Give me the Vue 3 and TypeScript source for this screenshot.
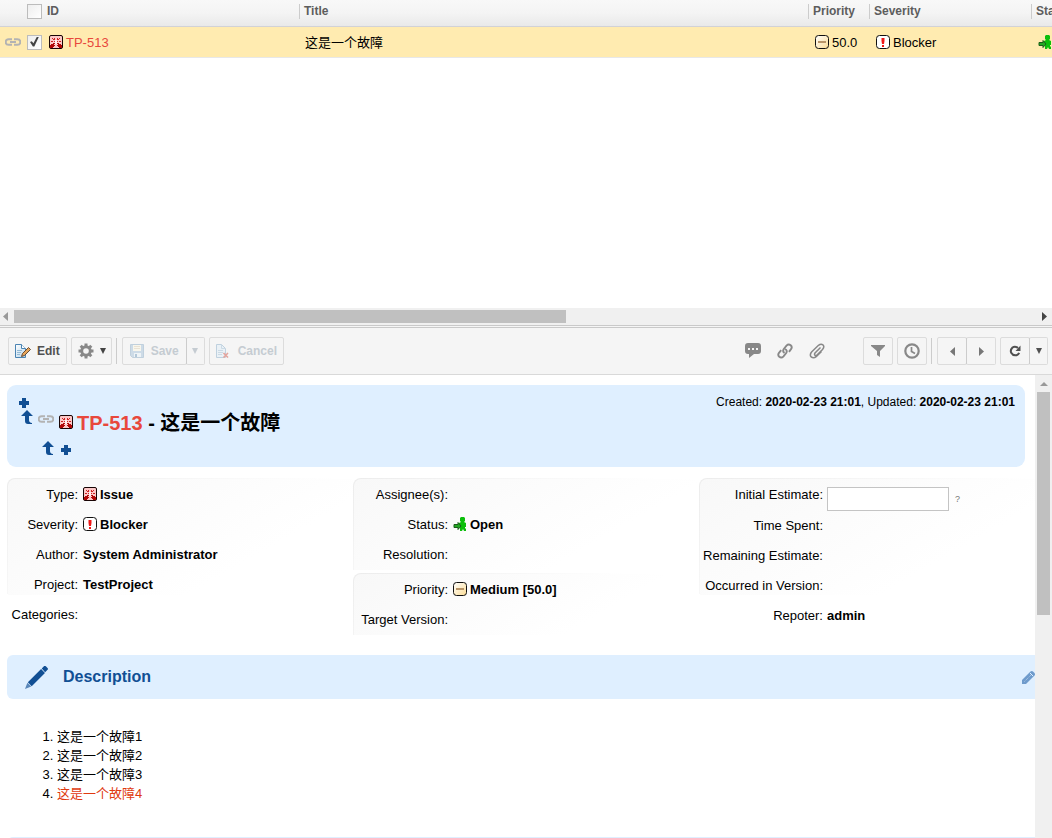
<script setup lang="ts">
import { ref } from 'vue'

interface Field {
  label: string
  value?: string
  icon?: string
  input?: boolean
}

interface Panel {
  tall?: boolean
  fields: Field[]
}

const allSelected = ref(false)
const rowSelected = ref(true)
const estimate = ref('')

const columns: { name: string; panels: Panel[] }[] = [
  {
    name: 'first',
    panels: [
      {
        tall: true,
        fields: [
          { label: 'Type:', value: 'Issue', icon: 'issue' },
          { label: 'Severity:', value: 'Blocker', icon: 'blocker' },
          { label: 'Author:', value: 'System Administrator' },
          { label: 'Project:', value: 'TestProject' },
          { label: 'Categories:' },
        ],
      },
    ],
  },
  {
    name: 'second',
    panels: [
      {
        fields: [
          { label: 'Assignee(s):' },
          { label: 'Status:', value: 'Open', icon: 'open' },
          { label: 'Resolution:' },
        ],
      },
      {
        fields: [
          { label: 'Priority:', value: 'Medium [50.0]', icon: 'medium' },
          { label: 'Target Version:' },
        ],
      },
    ],
  },
  {
    name: 'third',
    panels: [
      {
        tall: true,
        fields: [
          { label: 'Initial Estimate:', input: true },
          { label: 'Time Spent:' },
          { label: 'Remaining Estimate:' },
          { label: 'Occurred in Version:' },
          { label: 'Repoter:', value: 'admin' },
        ],
      },
    ],
  },
]

const steps = [
  { text: '这是一个故障1' },
  { text: '这是一个故障2' },
  { text: '这是一个故障3' },
  { text: '这是一个故障4', highlighted: true },
]
</script>

<template>
  <div class="page">
    <svg class="sprite" aria-hidden="true">
      <defs>
        <linearGradient id="cream" x1="0" y1="0" x2="1" y2="1">
          <stop offset="0" stop-color="#fff" />
          <stop offset="1" stop-color="#fbdc94" />
        </linearGradient>
        <linearGradient id="paper" x1="0" y1="0" x2="1" y2="1">
          <stop offset="0" stop-color="#fff" />
          <stop offset="1" stop-color="#b5d4ea" />
        </linearGradient>
      </defs>
      <symbol id="issue" viewBox="0 0 14 14">
        <rect x=".5" y=".5" width="13" height="13" rx="1.500" fill="#fcc8c8" stroke="#180404" />
        <path d="M1 13V10H2V9H4V8H6V9H5V10H6V11H5V12H4V13zM13 13V10H12V9H10V8H8V9H9V10H8V11H9V12H10V13z" fill="#b00808" />
        <path d="M3 3h1v1H3zM4 4h1v1H4zM10 3h1v1h-1zM9 4h1v1H9zM2 6h2v1H2zM10 6h2v1h-2zM5 3h1v2H5zM8 3h1v2H8zM5 6h1v1H5zM8 6h1v1H8z" fill="#cc2222" />
        <path d="M6 5h2v4H6z" fill="#fff0f0" />
      </symbol>
      <symbol id="blocker" viewBox="0 0 14 14">
        <rect x=".5" y=".5" width="13" height="13" rx="3" fill="#fff" stroke="#111" />
        <path d="M5.500 3h3v3l-.5 3H6l-.5-3zM6 10h2v2H6z" fill="#f01818" />
      </symbol>
      <symbol id="medium" viewBox="0 0 14 14">
        <rect x=".5" y=".5" width="13" height="13" rx="3" fill="url(#cream)" stroke="#111" />
        <path d="M3 6h8v2H3z" fill="#b99568" />
      </symbol>
      <symbol id="open" viewBox="0 0 14 14">
        <path d="M8 0h3l1 1v3l-1 1 2 1v4h-1v1l1 1v2h-2l-1-2-1 2H7v-4L6 9V6l2-1-1-1V1z" fill="#0cbf0c" />
        <path d="M1 7.500h4V5.500L8 9l-3 3.500V10.500H1z" fill="#24a824" stroke="#1b5e1b" />
      </symbol>
      <symbol id="chain" viewBox="0 0 16 8">
        <path d="M7 1.200H3.500a2.700 2.700 0 0 0 0 5.600H7M9 1.200h3.500a2.700 2.700 0 0 1 0 5.600H9M5 4h6" fill="none" stroke="currentColor" stroke-width="1.900" />
      </symbol>
      <symbol id="plus" viewBox="0 0 10 10">
        <path d="M3 0h4v3h3v4H7v3H3V7H0V3h3z" fill="#114f94" />
      </symbol>
      <symbol id="up" viewBox="0 0 12 14">
        <path d="M6 0l6 6H8v4q0 2.500 3 3v1H7q-3 0-3-3V6H0z" fill="#114f94" />
      </symbol>
      <symbol id="left" viewBox="0 0 5 9"><path d="M5 0v9L0 4.500z" fill="currentColor" /></symbol>
      <symbol id="right" viewBox="0 0 5 9"><path d="M0 0v9l5-4.500z" fill="currentColor" /></symbol>
      <symbol id="down" viewBox="0 0 6 6"><path d="M0 0h6L3 6z" fill="currentColor" /></symbol>
      <symbol id="edit" viewBox="0 0 16 16">
        <path d="M.5 1.500h6l4 4v9H.5z" fill="url(#paper)" stroke="#4b84b3" />
        <path d="M6.500 1.500v4h4" fill="#fff" stroke="#4b84b3" />
        <path d="M2 7.500h5M2 9.500h4M2 11.500h3" stroke="#93bad6" />
        <path d="M6.500 13.500l1-3 6-6 2 2-6 6z" fill="#e6a55b" stroke="#5b4029" stroke-width=".900" />
      </symbol>
      <symbol id="gear" viewBox="0 0 16 16">
        <g fill="currentColor">
          <path d="M6.500 .5h3v15h-3z" />
          <path d="M6.500 .5h3v15h-3z" transform="rotate(45 8 8)" />
          <path d="M6.500 .5h3v15h-3z" transform="rotate(90 8 8)" />
          <path d="M6.500 .5h3v15h-3z" transform="rotate(135 8 8)" />
          <circle cx="8" cy="8" r="5.700" />
        </g>
        <circle cx="8" cy="8" r="2.800" fill="#f5f5f5" />
      </symbol>
      <symbol id="disk" viewBox="0 0 14 14">
        <path d="M.5.5h13v13h-11l-2-2z" fill="#cddbe7" stroke="#c0d0dd" />
        <path d="M3 1h8v6H3z" fill="#f8f6ec" />
        <path d="M4 2.500h6M4 4.500h6" stroke="#e9e2d4" />
        <path d="M4 9h7v4H4z" fill="#eef3f6" />
        <path d="M5 10h2v3H5z" fill="#b2c7d8" />
      </symbol>
      <symbol id="discard" viewBox="0 0 14 14">
        <path d="M.5.5h5l4 4v9h-9z" fill="#eaf1f6" stroke="#bfd1df" />
        <path d="M5.500.5v4h4M2 6.500h5M2 8.500h5M2 10.500h4" fill="none" stroke="#cbdae5" />
        <path d="M7.500 9l4.500 4.500M12 9l-4.500 4.500" stroke="#e3a49d" stroke-width="1.600" />
      </symbol>
      <symbol id="comment" viewBox="0 0 16 16">
        <path d="M3 0h10q3 0 3 3v5q0 3-3 3H9l-5 4v-4H3q-3 0-3-3V3q0-3 3-3z" fill="currentColor" />
        <path d="M3 5h2v2H3zM7 5h2v2H7zM11 5h2v2h-2z" fill="#f5f5f5" />
      </symbol>
      <symbol id="link" viewBox="0 0 16 16">
        <g fill="none" stroke="currentColor" stroke-width="1.900">
          <path d="M7.500 10Q5.200 8.500 6.800 6L9.500 2.600Q11.500.600 13.700 2.200 15.600 4 14 6.200L12 8.800" />
          <path d="M8 6Q10.800 7.500 9.200 10L6.500 13.300Q4.500 15.400 2.300 13.800.4 12 2 9.800L4.200 7.200" />
        </g>
      </symbol>
      <symbol id="clip" viewBox="0 0 16 16">
        <path d="M11.500 4.500L6 10Q5 11.500 6 12.300 7 13 8 12L13.500 6.500Q15.800 3.800 14 1.900 12 .3 9.500 2.300L2.800 8.800Q.2 11.800 2.200 13.900 4.500 15.800 7.200 13.600L12.500 8.500" fill="none" stroke="currentColor" stroke-width="1.500" />
      </symbol>
      <symbol id="filter" viewBox="0 0 14 14">
        <path d="M0 1h14v1L9 7v6L6 11V7L0 2z" fill="currentColor" />
      </symbol>
      <symbol id="clock" viewBox="0 0 16 16">
        <circle cx="8" cy="8" r="6.700" fill="none" stroke="currentColor" stroke-width="2.200" />
        <path d="M7.500 4v4.500L11 10.500" fill="none" stroke="currentColor" stroke-width="1.700" />
      </symbol>
      <symbol id="refresh" viewBox="0 0 12 12">
        <path d="M9 3Q6 .6 3.500 2.500 1 5 2.200 7.800 4 11 7.500 10.200 9.500 9.500 10.200 7.800" fill="none" stroke="currentColor" stroke-width="2" />
        <path d="M11.500.5V6H6.500z" fill="currentColor" />
      </symbol>
      <symbol id="pencil" viewBox="0 0 24 24">
        <path d="M17.500 2.500L20 0q1-.5 2 .5L23.500 2q1 1 0 2L21 6.500z" fill="currentColor" />
        <path d="M16.800 3.200L20.800 7.200 7 21 3 17z" fill="currentColor" />
        <path d="M2.500 17.500L6.500 21.500 0 24z" fill="currentColor" opacity=".65" />
      </symbol>
      <symbol id="small-pencil" viewBox="0 0 13 13">
        <path d="M0 9L8.500.5q1.500-1 3 .5l1 1q1 1.500 0 2.500L4 13H0z" fill="#6f9bcc" />
        <path d="M2.500 10.500l7-7" stroke="#b9d1ec" stroke-dasharray="1 1" />
        <path d="M8 2l3 3" stroke="#dfefff" />
      </symbol>
    </svg>

    <section class="list-pane">
      <table>
        <colgroup>
          <col class="c-select" /><col class="c-id" /><col />
          <col class="c-priority" /><col class="c-severity" /><col class="c-status" />
        </colgroup>
        <thead>
          <tr>
            <th class="select"><input v-model="allSelected" type="checkbox" aria-label="Select all" /></th>
            <th class="id">ID</th>
            <th><span class="head">Title</span></th>
            <th><span class="head">Priority</span></th>
            <th><span class="head">Severity</span></th>
            <th><span class="head">Status</span></th>
          </tr>
        </thead>
        <tbody>
          <tr>
            <td class="select">
              <div class="select-cell">
                <svg class="chain"><use href="#chain" /></svg>
                <input v-model="rowSelected" type="checkbox" aria-label="Select TP-513" />
              </div>
            </td>
            <td class="id">
              <a class="cell" href="#TP-513"><svg class="i14"><use href="#issue" /></svg>TP-513</a>
            </td>
            <td>这是一个故障</td>
            <td class="iconic"><span class="cell"><svg class="i14"><use href="#medium" /></svg>50.0</span></td>
            <td class="iconic"><span class="cell"><svg class="i14"><use href="#blocker" /></svg>Blocker</span></td>
            <td class="iconic"><span class="cell"><svg class="i14"><use href="#open" /></svg>Open</span></td>
          </tr>
        </tbody>
      </table>
    </section>

    <div class="hscroll">
      <svg class="tri muted"><use href="#left" /></svg>
      <div class="htrack"><div class="hthumb"></div></div>
      <svg class="tri"><use href="#right" /></svg>
    </div>
    <div class="splitter"></div>

    <div class="toolbar">
      <button class="btn edit"><svg class="i16"><use href="#edit" /></svg>Edit</button>
      <button class="btn menu" aria-label="Actions">
        <svg class="i16 grey"><use href="#gear" /></svg><svg class="caret"><use href="#down" /></svg>
      </button>
      <span class="sep"></span>
      <div class="group">
        <button class="btn save" disabled><svg class="i14"><use href="#disk" /></svg>Save</button>
        <button class="btn drop" disabled aria-label="Save options"><svg class="caret"><use href="#down" /></svg></button>
      </div>
      <button class="btn cancel" disabled><svg class="i14"><use href="#discard" /></svg>Cancel</button>

      <div class="plain-actions">
        <button aria-label="Comment"><svg class="i16"><use href="#comment" /></svg></button>
        <button aria-label="Link"><svg class="i16"><use href="#link" /></svg></button>
        <button aria-label="Attach"><svg class="i16"><use href="#clip" /></svg></button>
      </div>
      <button class="btn square grey" aria-label="Filter"><svg class="i14"><use href="#filter" /></svg></button>
      <button class="btn square grey" aria-label="History"><svg class="i16"><use href="#clock" /></svg></button>
      <span class="sep"></span>
      <div class="group">
        <button class="btn square dim" aria-label="Previous"><svg class="tri"><use href="#left" /></svg></button>
        <button class="btn square dim" aria-label="Next"><svg class="tri"><use href="#right" /></svg></button>
      </div>
      <div class="group">
        <button class="btn square" aria-label="Refresh"><svg class="i12"><use href="#refresh" /></svg></button>
        <button class="btn drop" aria-label="Refresh options"><svg class="caret"><use href="#down" /></svg></button>
      </div>
    </div>

    <div class="detail-pane">
      <main class="detail">
        <header class="hero">
          <div class="hero-top">
            <button class="plus" aria-label="Add sibling"><svg><use href="#plus" /></svg></button>
            <p>Created: <b>2020-02-23 21:01</b>, Updated: <b>2020-02-23 21:01</b></p>
          </div>
          <div class="hero-title">
            <button class="up" aria-label="Go to parent"><svg><use href="#up" /></svg></button>
            <svg class="chain"><use href="#chain" /></svg>
            <svg class="i14"><use href="#issue" /></svg>
            <h1><a href="#TP-513">TP-513</a> - 这是一个故障</h1>
          </div>
          <div class="hero-bottom">
            <button class="up" aria-label="Go up"><svg><use href="#up" /></svg></button>
            <button class="plus" aria-label="Add child"><svg><use href="#plus" /></svg></button>
          </div>
        </header>

        <div class="fields">
          <div v-for="col in columns" :key="col.name" class="column" :class="col.name">
            <dl v-for="(panel, i) in col.panels" :key="i" class="panel" :class="{ tall: panel.tall }">
              <div v-for="f in panel.fields" :key="f.label" class="field" :class="{ editable: f.input }">
                <dt>
                  <label v-if="f.input" for="estimate">{{ f.label }}</label>
                  <template v-else>{{ f.label }}</template>
                </dt>
                <dd>
                  <template v-if="f.input">
                    <input id="estimate" v-model="estimate" type="text" /><span class="hint">?</span>
                  </template>
                  <template v-else>
                    <svg v-if="f.icon" class="i14"><use :href="'#' + f.icon" /></svg>{{ f.value }}
                  </template>
                </dd>
              </div>
            </dl>
          </div>
        </div>

        <section class="description">
          <header class="bar">
            <svg class="big-pencil"><use href="#pencil" /></svg>
            <h2>Description</h2>
            <button class="bar-edit" aria-label="Edit description"><svg><use href="#small-pencil" /></svg></button>
          </header>
          <ol>
            <li v-for="s in steps" :key="s.text"><span :class="{ highlighted: s.highlighted }">{{ s.text }}</span></li>
          </ol>
        </section>
        <div class="bar"></div>
      </main>
      <div class="vscroll">
        <i class="tri-up"></i>
        <div class="vtrack"><div class="vthumb"></div></div>
      </div>
    </div>
  </div>
</template>

<style>
body {
  margin: 0;
  background: #fff;
}
</style>

<style scoped>
* {
  box-sizing: border-box;
}
.page {
  display: flex;
  flex-direction: column;
  height: 100vh;
  overflow: hidden;
  font: 13px/19px "Liberation Sans", Arial, "Noto Sans CJK SC", sans-serif;
  color: #000;
}
.sprite {
  position: absolute;
  width: 0;
  height: 0;
}
svg {
  display: block;
  flex: none;
}
button {
  font: inherit;
  padding: 0;
  border: 0;
  background: none;
  color: inherit;
}
a {
  color: #e8483c;
  text-decoration: none;
}
.i12 { width: 12px; height: 12px; }
.i14 { width: 14px; height: 14px; }
.i16 { width: 16px; height: 16px; }
.chain { width: 16px; height: 8px; color: #b3b3b3; }
.tri { width: 5px; height: 9px; }
.caret { width: 6px; height: 6px; }
.grey { color: #888; }

.list-pane {
  flex: 0 0 308px;
  overflow: hidden;
}
table {
  width: calc(100% + 80px);
  table-layout: fixed;
  border-collapse: separate;
  border-spacing: 0;
}
.c-select { width: 47px; }
.c-id { width: 252px; }
.c-priority { width: 61px; }
.c-severity { width: 162px; }
.c-status { width: 101px; }
th {
  height: 27px;
  padding: 0 0 4px;
  background: linear-gradient(#f8f8f8, #f4f4f4 50%, #e9e9e9);
  border-bottom: 1px solid #d2d2d6;
  color: #5d5d5d;
  font-size: 12px;
  line-height: 15px;
  text-align: left;
}
.head {
  display: block;
  padding-left: 4px;
  border-left: 1px solid #ccc;
}
td {
  height: 31px;
  padding: 0 0 0 6px;
  background: #ffebb0;
  border-bottom: 1px solid #e8e8e8;
}
th.select { padding-left: 27px; }
th input { display: block; }
td.select { padding-left: 5px; }
td.id { padding-left: 2px; }
td.iconic { padding-left: 7px; }
.select-cell {
  display: flex;
  align-items: center;
  gap: 6px;
}
.cell {
  display: flex;
  align-items: center;
  gap: 3px;
}
input[type="checkbox"] {
  appearance: none;
  width: 15px;
  height: 15px;
  margin: 0;
  border: 1px solid #bcbcbc;
  background: linear-gradient(135deg, #eee, #fff);
}
input[type="checkbox"]:checked::after {
  content: "";
  display: block;
  width: 9px;
  height: 10px;
  margin: 1px 2px;
  background: #444;
  clip-path: polygon(0 55%, 20% 48%, 38% 68%, 78% 0, 100% 0, 48% 100%, 32% 100%);
}

.hscroll {
  flex: none;
  display: flex;
  align-items: center;
  gap: 6px;
  height: 17px;
  padding: 0 5px 0 3px;
  background: #f0f0f0;
  color: #444;
}
.muted { color: #999; }
.htrack { flex: 1; }
.hthumb {
  width: 54%;
  height: 13px;
  background: #c0c0c0;
}
.splitter {
  flex: none;
  height: 3px;
  border: solid #c9c9c9;
  border-width: 1px 0;
  background: #f5f5f5;
}

.toolbar {
  flex: none;
  display: flex;
  align-items: center;
  gap: 4px;
  height: 47px;
  padding: 0 4px 0 8px;
  background: #f5f5f5;
  border-bottom: 1px solid #d9d9d9;
  font-size: 12px;
  font-weight: bold;
  color: #505050;
}
.btn {
  display: flex;
  align-items: center;
  height: 28px;
  border: 1px solid #dcdcdc;
  border-radius: 2px;
}
.btn:disabled { color: #c5ccd2; }
.edit { padding: 0 6px; gap: 6px; }
.menu { padding: 0 6px; gap: 6px; width: 41px; }
.save { padding: 0 7px; gap: 7px; }
.cancel { padding: 0 6px; gap: 8px; }
.square { width: 30px; justify-content: center; }
.drop { width: 19px; justify-content: center; }
.dim { color: #777; }
.menu .caret { color: #444; }
.sep {
  width: 1px;
  height: 26px;
  margin-right: 1px;
  background: #ccc;
}
.group { display: flex; }
.group .btn + .btn {
  border-left-color: #ccc;
  margin-left: -1px;
}
.plain-actions {
  display: flex;
  gap: 16px;
  margin-left: auto;
  margin-right: 34px;
  color: #888;
}

.detail-pane {
  flex: 1;
  display: flex;
  min-height: 0;
}
.detail {
  flex: 1;
  min-width: 0;
  overflow: hidden;
  padding: 10px 0 0 7px;
}
.hero {
  margin-right: 10px;
  padding: 8px 10px 12px 12px;
  border-radius: 9px;
  background: #dfefff;
}
.plus svg { width: 10px; height: 10px; }
.up svg { width: 12px; height: 14px; }
.hero-top {
  display: flex;
  align-items: flex-start;
  justify-content: space-between;
  padding-top: 1px;
}
.hero-top .plus { padding-top: 4px; }
.hero-top p {
  margin: 0;
  font-size: 12px;
  line-height: 16px;
}
.hero-title {
  display: flex;
  align-items: flex-start;
  padding-left: 2px;
}
.hero-title .chain { margin: 5px 5px 0; }
.hero-title .i14 { margin-top: 5px; }
h1 {
  margin: 0 0 0 4px;
  font-size: 20px;
  line-height: 27px;
}
.hero-bottom {
  display: flex;
  align-items: flex-end;
  gap: 7px;
  padding: 4px 0 0 23px;
}

.fields {
  display: grid;
  grid-template-columns: repeat(3, 1fr);
  margin: 11px -10px 20px 0;
}
.column {
  display: flex;
  flex-direction: column;
  gap: 3px;
}
.panel {
  margin: 0;
  padding-bottom: 1px;
  border: solid transparent;
  border-width: 1px 0 0 1px;
  border-radius: 8px 0 0 0;
  background:
    linear-gradient(150deg, #f8f8f8, #fff 70%) padding-box no-repeat,
    linear-gradient(150deg, #ececec, #fff 60%) border-box no-repeat;
}
.tall { background-size: 100% 116px; }
.field {
  display: flex;
  align-items: center;
  gap: 5px;
  height: 30px;
}
dt {
  flex: none;
  text-align: right;
  white-space: nowrap;
}
.first dt { width: 70px; }
.second dt { width: 94px; }
.third dt { width: 123px; }
.third .field { gap: 4px; }
dd {
  display: flex;
  align-items: center;
  gap: 3px;
  margin: 0;
  font-weight: bold;
}
.field.editable {
  align-items: flex-start;
  height: 31px;
  padding-top: 6px;
}
.editable dd { padding-top: 2px; }
#estimate {
  width: 122px;
  height: 24px;
  border: 1px solid #c4c4c4;
  background: #fff;
  font: inherit;
}
.hint {
  margin-left: 3px;
  color: #777;
  font-size: 9px;
  font-weight: normal;
}

.bar {
  display: flex;
  align-items: center;
  height: 44px;
  padding-left: 18px;
  border-radius: 6px 0 0 6px;
  background: #dfefff;
  color: #114f94;
}
.big-pencil { width: 23px; height: 23px; }
h2 {
  flex: 1;
  margin: 0 0 0 15px;
  font-size: 16px;
  line-height: 20px;
}
.bar-edit svg { width: 13px; height: 13px; }
ol {
  margin: 28px 0 34px;
  padding-left: 50px;
}
.highlighted { color: #e03a10; }

.vscroll {
  flex: 0 0 17px;
  display: flex;
  flex-direction: column;
  align-items: center;
  background: #f0f0f0;
}
.tri-up {
  margin: 7px 0 6px;
  border: solid transparent;
  border-width: 0 4px 4px;
  border-bottom-color: #999;
}
.vtrack {
  flex: 1;
  width: 13px;
}
.vthumb {
  height: 50%;
  background: #c0c0c0;
}
</style>
